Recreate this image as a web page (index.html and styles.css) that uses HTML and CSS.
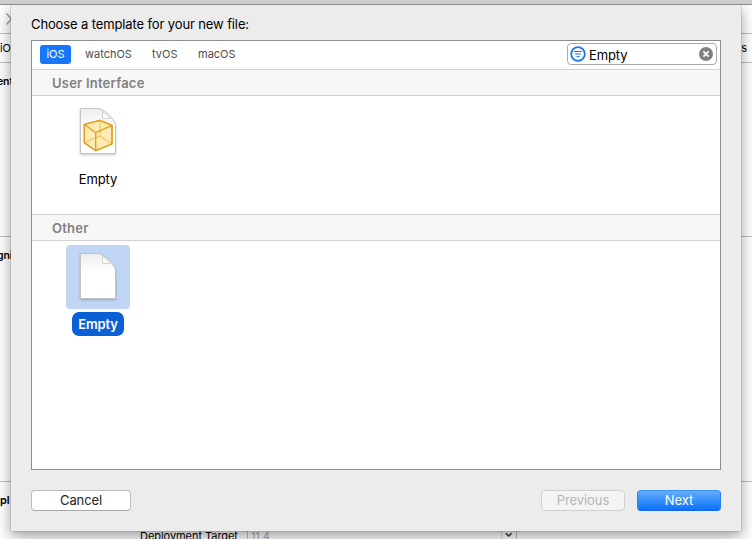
FILE: index.html
```html
<!DOCTYPE html>
<html lang="en">
<head>
<meta charset="utf-8">
<title>New File</title>
<link rel="stylesheet" href="styles.css">
</head>
<body>
<div class="editor">
  <div class="titlebar"></div>
  <div class="jumpbar"><svg class="chevron" width="6" height="12" viewBox="0 0 6 12"><path d="M0.5 0.5L5.5 6L0.5 11.5"/></svg></div>
  <div class="tabbar"><span class="tab-left">iO</span><span class="tab-right">s</span></div>
  <div class="section identity"><b>ent</b></div>
  <div class="section signing"><b>gni</b></div>
  <div class="section deployment"><b>pl</b>
    <div class="target"><span class="target-label">Deployment Target</span><span class="target-field"><span>11.4</span><svg class="arrow" width="15" height="16" viewBox="0 0 15 16"><path d="M4 5L7.2 8L10.4 5"/></svg></span></div>
  </div>
</div>
<main class="sheet">
  <h1>Choose a template for your new file:</h1>
  <section class="chooser">
    <header class="filters">
      <nav><span class="tab active">iOS</span><span class="tab watch">watchOS</span><span class="tab tv">tvOS</span><span class="tab mac">macOS</span></nav>
      <div class="search">
        <svg width="16" height="16" viewBox="0 0 16 16"><circle cx="8" cy="8" r="6.8" fill="none" stroke="#1677f8" stroke-width="1.8"/><path d="M4 5.5h8M5.2 8h5.6M6.5 10.5h3" stroke="#1677f8" stroke-width="1.1"/></svg>
        <span class="query">Empty</span>
        <svg class="clear" width="14" height="14" viewBox="0 0 14 14"><circle cx="7" cy="7" r="7" fill="#808080"/><path d="M4.4 4.4l5.2 5.2M9.6 4.4L4.4 9.6" stroke="#fff" stroke-width="1.7"/></svg>
      </div>
    </header>
    <h2>User Interface</h2>
    <div class="grid">
      <div class="item">
        <div class="thumb">
          <svg width="44" height="52" viewBox="0 0 44 52">
            <defs><linearGradient id="paper" x1="0" y1="0" x2="0" y2="1"><stop offset="0" stop-color="#ececec"/><stop offset=".4" stop-color="#fff"/></linearGradient></defs>
            <path class="page" d="M4.5 3.5H22C28 4 38 13.5 39.5 20V48.5H4.5Z" fill="url(#paper)"/>
            <path class="fold" d="M26.5 6.5V13.5H34.5Z"/>
            <g class="cube"><path d="M8.3 19.3L24 15.3L36 20.3V39L19.7 45.7L8.3 37.7Z"/><path class="hidden-edge" d="M24 15.3V31M8.3 37.7L24 31L36 39"/><path d="M8.3 19.3L24 15.3L36 20.3V39L19.7 45.7L8.3 37.7V19.3L19.7 27.7L36 20.3M19.7 27.7V45.7"/></g>
          </svg>
        </div>
        <span class="caption">Empty</span>
      </div>
    </div>
    <h2>Other</h2>
    <div class="grid">
      <div class="item selected">
        <div class="thumb">
          <svg width="44" height="52" viewBox="0 0 44 52">
            <path class="page" d="M4.5 3.5H22C28 4 38 13.5 39.5 20V48.5H4.5Z" fill="url(#paper)"/>
            <path class="fold" d="M26.5 6.5V13.5H34.5Z"/>
          </svg>
        </div>
        <span class="caption">Empty</span>
      </div>
    </div>
  </section>
  <footer>
    <button class="cancel">Cancel</button>
    <button class="previous" disabled>Previous</button>
    <button class="next">Next</button>
  </footer>
</main>
</body>
</html>
```
FILE: styles.css
```css
* { box-sizing: border-box; }
body { margin: 0; width: 752px; height: 539px; overflow: hidden; background: #fff; color: #000; font: 13px/16px Inter, "Liberation Sans", sans-serif; letter-spacing: -0.1px; }
h1, h2 { margin: 0; }
svg { display: block; flex: none; }

.editor { height: 539px; overflow: hidden; font-size: 11px; }
.titlebar { height: 5px; background: #cdcdcd; border-bottom: 1px solid #8e8e8e; }
.jumpbar { height: 29px; padding: 8px 0 0 6px; border-bottom: 1px solid #bdbdbd; }
.chevron { fill: none; stroke: #999; stroke-width: 1.2; }
.tabbar { display: flex; justify-content: space-between; height: 29px; padding: 6px 5px 0 0; border-bottom: 1px solid #bdbdbd; }
.section { padding-top: 11px; border-bottom: 1px solid #bdbdbd; font-size: 10.5px; }
.section b { display: block; margin-left: -3px; font-weight: 600; }
.identity { height: 174px; }
.signing { height: 245px; }
.signing b { margin-left: -3px; }
.deployment { padding-top: 10px; border: 0; font-size: 11px; }
.deployment b { margin-left: 0; }
.target { display: flex; align-items: flex-start; margin-top: 20px; padding-left: 140px; }
.target-label { width: 107px; letter-spacing: -0.05px; }
.target-field { display: flex; justify-content: space-between; width: 270px; padding-left: 3px; border: 1px solid #c5c5c5; border-width: 0 1px; color: #aaa; }
.arrow { border-left: 1px solid #ddd; fill: none; stroke: #333; stroke-width: 1.5; }

.sheet { position: absolute; left: 11px; top: 5px; width: 730px; height: 526px; padding: 11px 20px 0; background: #ececec; box-shadow: 0 0 1px rgba(0,0,0,.55), 0 5px 14px rgba(0,0,0,.4); clip-path: inset(0 -30px -30px -30px); }
h1 { height: 24px; font-size: 13px; font-weight: 400; line-height: 16px; letter-spacing: -0.12px; }
.chooser { width: 690px; height: 430px; border: 1px solid #8c8c8c; background: #fff; }
.filters { display: flex; justify-content: space-between; height: 28px; padding: 2px 3px 0 8px; }
nav { display: flex; align-items: flex-start; padding-top: 2px; color: #4c4c4c; font-size: 11px; line-height: 19px; letter-spacing: 0; }
.tab { white-space: nowrap; }
.active { width: 31px; height: 19px; border-radius: 3px; background: #1677fb; color: #fff; text-align: center; }
.watch { margin-left: 14px; width: 67px; }
.tv { width: 46px; }
.search { display: flex; align-items: center; width: 150px; height: 22px; padding: 0 3px 0 2px; border: 1px solid #a9a9a9; border-radius: 4px; background: #fff; }
.query { flex: 1; margin-left: 3px; padding-top: 1px; }
h2 { height: 27px; padding: 5px 0 0 20px; border: 1px solid #d2d2d2; border-width: 1px 0; background: #f7f7f7; color: #808080; font-size: 13px; font-weight: 600; line-height: 16px; letter-spacing: 0.22px; }
.grid { height: 118px; padding: 4px 0 0 34px; }
.item { display: flex; flex-direction: column; align-items: center; width: 64px; }
.thumb { display: flex; align-items: flex-start; justify-content: center; width: 64px; height: 64px; padding-top: 5px; border-radius: 4px; }
.caption { margin-top: 3px; height: 24px; padding: 0 6px; border-radius: 7px; line-height: 25px; }
.selected .thumb { background: #c0d6f4; }
.selected .caption { background: #0b60d3; color: #fff; font-weight: 600; letter-spacing: -0.15px; }
.page { stroke: #bebebe; stroke-width: .8; filter: drop-shadow(0 1px 1px rgba(0,0,0,.25)); }
.fold { fill: #fff; stroke: #c8c8c8; stroke-width: .8; }
.cube path { fill: none; stroke: #e3a11d; stroke-width: 1.3; stroke-linejoin: round; }
.cube path:first-child { fill: #fdeab5; }
.cube .hidden-edge { stroke: #efc55e; stroke-width: 1.1; }

footer { display: flex; padding-top: 20px; }
button { height: 21px; padding: 0; border: 1px solid #bcbcbc; border-bottom-color: #a8a8a8; border-radius: 4px; background: #fff; color: #222; font: inherit; line-height: 19px; letter-spacing: -0.1px; }
.cancel { width: 100px; }
.previous { width: 84px; margin-left: auto; border-color: #d0d0d0; background: #f4f4f4; color: #b5b5b5; }
.next { width: 84px; margin-left: 12px; border-color: #3a93f7 #2680f5 #1068e6; background: linear-gradient(#62aefb, #0d71ff); color: #fff; }
```
